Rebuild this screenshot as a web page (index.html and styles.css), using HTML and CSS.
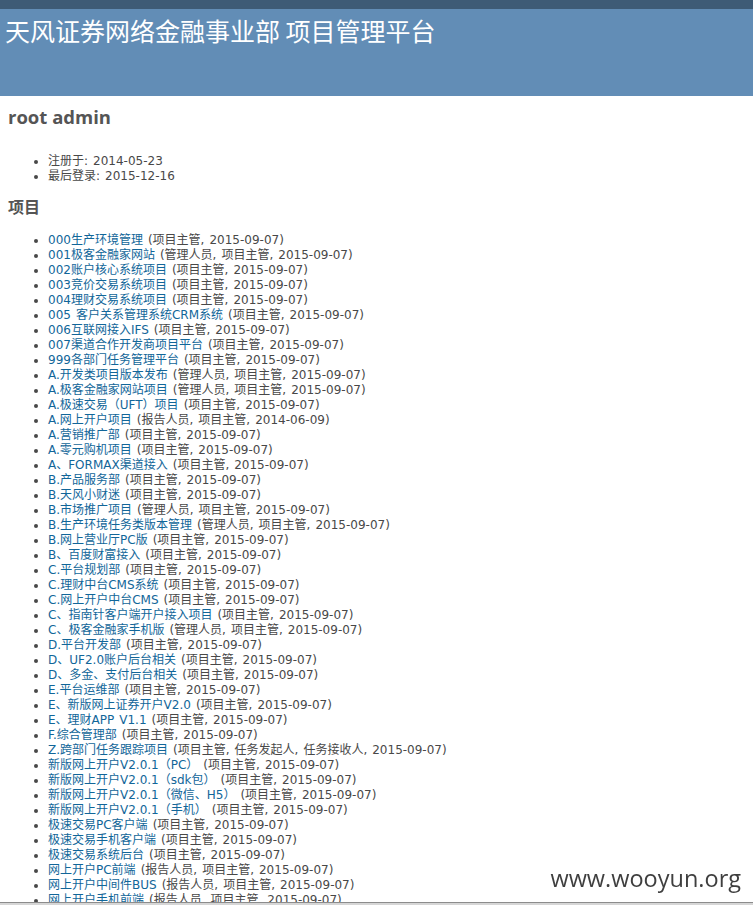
FILE: index.html
```html
<!DOCTYPE html>
<html lang="zh-CN">
<head>
<meta charset="utf-8">
<title>root admin - 项目管理平台</title>
<link rel="stylesheet" href="styles.css">
</head>
<body>
<div class="top-menu"></div>
<div class="header">
  <h1 class="site-title">天风证券网络金融事业部 项目管理平台</h1>
</div>
<div class="content">
  <h2 class="user-name">root admin</h2>
  <ul class="info-list">
    <li>注册于: 2014-05-23</li>
    <li>最后登录: 2015-12-16</li>
  </ul>
  <h3 class="section-title">项目</h3>
  <ul class="project-list">
    <li><a href="#">000生产环境管理</a> (项目主管, 2015-09-07)</li>
    <li><a href="#">001极客金融家网站</a> (管理人员, 项目主管, 2015-09-07)</li>
    <li><a href="#">002账户核心系统项目</a> (项目主管, 2015-09-07)</li>
    <li><a href="#">003竞价交易系统项目</a> (项目主管, 2015-09-07)</li>
    <li><a href="#">004理财交易系统项目</a> (项目主管, 2015-09-07)</li>
    <li><a href="#">005 客户关系管理系统CRM系统</a> (项目主管, 2015-09-07)</li>
    <li><a href="#">006互联网接入IFS</a> (项目主管, 2015-09-07)</li>
    <li><a href="#">007渠道合作开发商项目平台</a> (项目主管, 2015-09-07)</li>
    <li><a href="#">999各部门任务管理平台</a> (项目主管, 2015-09-07)</li>
    <li><a href="#">A.开发类项目版本发布</a> (管理人员, 项目主管, 2015-09-07)</li>
    <li><a href="#">A.极客金融家网站项目</a> (管理人员, 项目主管, 2015-09-07)</li>
    <li><a href="#">A.极速交易（UFT）项目</a> (项目主管, 2015-09-07)</li>
    <li><a href="#">A.网上开户项目</a> (报告人员, 项目主管, 2014-06-09)</li>
    <li><a href="#">A.营销推广部</a> (项目主管, 2015-09-07)</li>
    <li><a href="#">A.零元购机项目</a> (项目主管, 2015-09-07)</li>
    <li><a href="#">A、FORMAX渠道接入</a> (项目主管, 2015-09-07)</li>
    <li><a href="#">B.产品服务部</a> (项目主管, 2015-09-07)</li>
    <li><a href="#">B.天风小财迷</a> (项目主管, 2015-09-07)</li>
    <li><a href="#">B.市场推广项目</a> (管理人员, 项目主管, 2015-09-07)</li>
    <li><a href="#">B.生产环境任务类版本管理</a> (管理人员, 项目主管, 2015-09-07)</li>
    <li><a href="#">B.网上营业厅PC版</a> (项目主管, 2015-09-07)</li>
    <li><a href="#">B、百度财富接入</a> (项目主管, 2015-09-07)</li>
    <li><a href="#">C.平台规划部</a> (项目主管, 2015-09-07)</li>
    <li><a href="#">C.理财中台CMS系统</a> (项目主管, 2015-09-07)</li>
    <li><a href="#">C.网上开户中台CMS</a> (项目主管, 2015-09-07)</li>
    <li><a href="#">C、指南针客户端开户接入项目</a> (项目主管, 2015-09-07)</li>
    <li><a href="#">C、极客金融家手机版</a> (管理人员, 项目主管, 2015-09-07)</li>
    <li><a href="#">D.平台开发部</a> (项目主管, 2015-09-07)</li>
    <li><a href="#">D、UF2.0账户后台相关</a> (项目主管, 2015-09-07)</li>
    <li><a href="#">D、多金、支付后台相关</a> (项目主管, 2015-09-07)</li>
    <li><a href="#">E.平台运维部</a> (项目主管, 2015-09-07)</li>
    <li><a href="#">E、新版网上证券开户V2.0</a> (项目主管, 2015-09-07)</li>
    <li><a href="#">E、理财APP V1.1</a> (项目主管, 2015-09-07)</li>
    <li><a href="#">F.综合管理部</a> (项目主管, 2015-09-07)</li>
    <li><a href="#">Z.跨部门任务跟踪项目</a> (项目主管, 任务发起人, 任务接收人, 2015-09-07)</li>
    <li><a href="#">新版网上开户V2.0.1（PC）</a> (项目主管, 2015-09-07)</li>
    <li><a href="#">新版网上开户V2.0.1（sdk包）</a> (项目主管, 2015-09-07)</li>
    <li><a href="#">新版网上开户V2.0.1（微信、H5）</a> (项目主管, 2015-09-07)</li>
    <li><a href="#">新版网上开户V2.0.1（手机）</a> (项目主管, 2015-09-07)</li>
    <li><a href="#">极速交易PC客户端</a> (项目主管, 2015-09-07)</li>
    <li><a href="#">极速交易手机客户端</a> (项目主管, 2015-09-07)</li>
    <li><a href="#">极速交易系统后台</a> (项目主管, 2015-09-07)</li>
    <li><a href="#">网上开户PC前端</a> (报告人员, 项目主管, 2015-09-07)</li>
    <li><a href="#">网上开户中间件BUS</a> (报告人员, 项目主管, 2015-09-07)</li>
    <li><a href="#">网上开户手机前端</a> (报告人员, 项目主管, 2015-09-07)</li>
  </ul>
</div>
<div class="watermark">www.wooyun.org</div>
<div class="bottom-edge"></div>
</body>
</html>
```
FILE: styles.css
```css
html, body {
  margin: 0;
  padding: 0;
  background: #fff;
}
body {
  font-family: "DejaVu Sans", "Noto Sans CJK SC", sans-serif;
  font-size: 12px;
  line-height: 15px;
  color: #484848;
}
.top-menu {
  height: 9px;
  background: #3e5b76;
}
.header {
  height: 87px;
  background: #628db6;
  padding: 0 5px;
  box-sizing: border-box;
  padding-top: 6px;
}
.site-title {
  margin: 0;
  font-family: "Noto Sans CJK SC", sans-serif;
  font-weight: normal;
  font-size: 25px;
  line-height: 30px;
  color: #fff;
}
.content {
  padding: 0 8px;
}
.user-name {
  margin: 10px 0 0;
  font-family: "Open Sans", "DejaVu Sans", sans-serif;
  font-weight: 700;
  font-size: 18.5px;
  line-height: 22px;
  color: #555;
}
.info-list {
  margin: 26px 0 0;
  padding-left: 40px;
  word-spacing: 1.2px;
}
.section-title {
  margin: 12px 0 0;
  font-family: "Noto Sans CJK SC", sans-serif;
  font-weight: 700;
  font-size: 16px;
  line-height: 20px;
  color: #555;
}
.project-list {
  margin: 17px 0 0;
  padding-left: 40px;
  word-spacing: 1.2px;
}
.project-list a {
  color: #169;
  text-decoration: none;
}
.watermark {
  position: fixed;
  right: 12px;
  bottom: 13px;
  font-family: "Open Sans", "DejaVu Sans", sans-serif;
  font-size: 23.5px;
  line-height: 28px;
  color: #3f3f3f;
}
.bottom-edge {
  position: fixed;
  left: 0;
  right: 0;
  bottom: 0;
  height: 2px;
  border-top: 1px solid #8c8c8c;
  background: #d6d6d6;
}
```
